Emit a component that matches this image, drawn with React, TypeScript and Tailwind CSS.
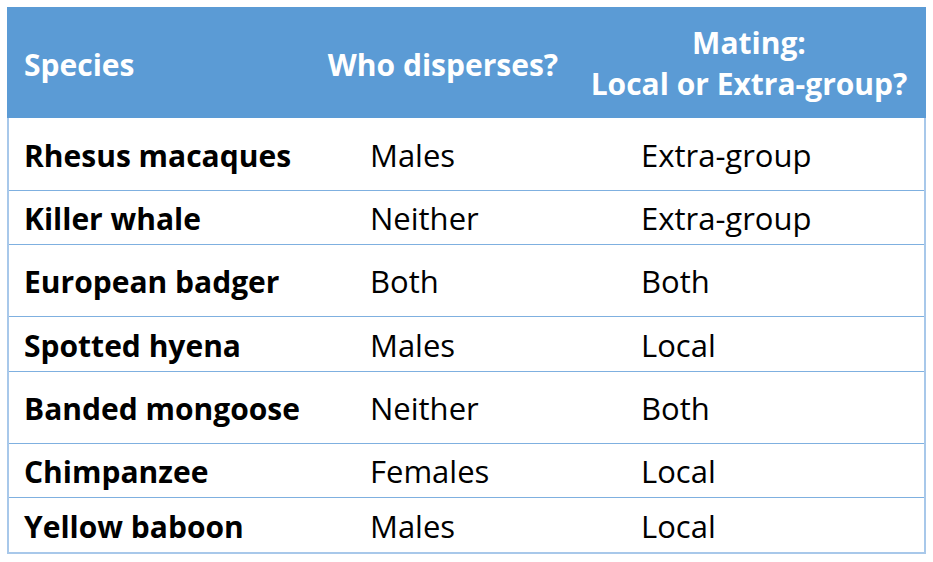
const rows = [
  { name: "Rhesus macaques", who: "Males", mating: "Extra-group", h: "h-[73px]" },
  { name: "Killer whale", who: "Neither", mating: "Extra-group", h: "h-[54px]" },
  { name: "European badger", who: "Both", mating: "Both", h: "h-[72px]" },
  { name: "Spotted hyena", who: "Males", mating: "Local", h: "h-[55px]" },
  { name: "Banded mongoose", who: "Neither", mating: "Both", h: "h-[72px]" },
  { name: "Chimpanzee", who: "Females", mating: "Local", h: "h-[54px]" },
  { name: "Yellow baboon", who: "Males", mating: "Local", h: "h-[54px]" },
];

export default function App() {
  return (
    <div className="w-[933px] h-[562px] bg-white pt-[7px] pl-[7px] font-['Open_Sans',sans-serif] text-[30px]">
      <div className="w-[919px] border-x-2 border-b-2 border-[#a8c8ea]">
        {/* header */}
        <div className="grid grid-cols-[311px_254px_1fr] h-[111px] bg-[#5b9bd5] text-white font-bold items-center -mx-[2px]">
          <div className="pl-[17px] pt-[3px]">Species</div>
          <div className="text-center pt-[3px] -ml-[4px]">Who disperses?</div>
          <div className="text-center leading-[41px]">
            Mating:
            <br />
            Local or Extra-group?
          </div>
        </div>

        {rows.map((r, i) => (
          <div
            key={r.name}
            className={`grid grid-cols-[309px_254px_1fr] items-center pt-[2px] text-black ${r.h} ${
              i < rows.length - 1 ? "border-b border-[#7fb0e0]" : ""
            }`}
          >
            <div className="pl-[15px] font-bold">{r.name}</div>
            <div className="pl-[52px] text-[31px]">{r.who}</div>
            <div className="pl-[69px] text-[31px]">{r.mating}</div>
          </div>
        ))}
      </div>
    </div>
  );
}
